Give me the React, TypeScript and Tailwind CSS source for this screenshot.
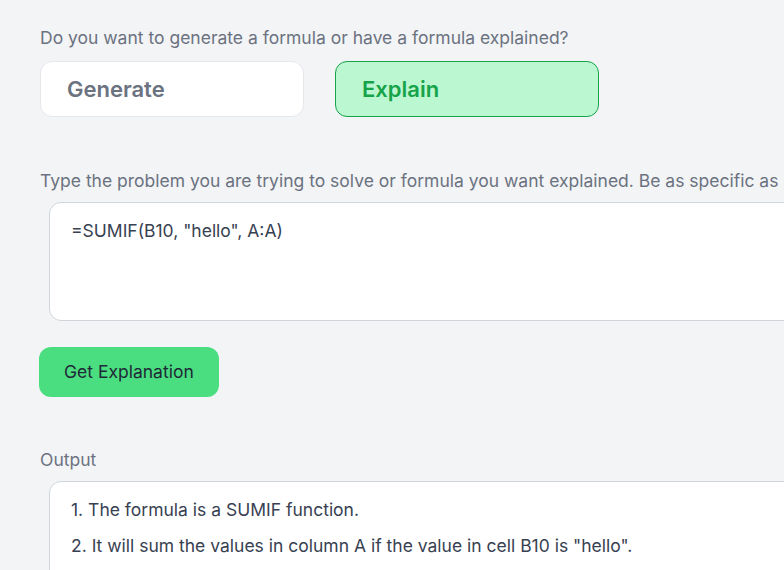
import { useState } from 'react';

export default function App() {
  const [mode, setMode] = useState<'generate' | 'explain'>('explain');
  const [input, setInput] = useState('=SUMIF(B10, "hello", A:A)');

  const lines = [
    '1. The formula is a SUMIF function.',
    '2. It will sum the values in column A if the value in cell B10 is "hello".',
  ];

  return (
    <div className="w-[784px] h-[570px] overflow-hidden bg-[#f3f4f6] font-['Inter',sans-serif]">
      <div className="w-[1000px] pl-10 pt-[26px]">
        <p className="text-[17.5px] leading-6 text-[#6b7280]">
          Do you want to generate a formula or have a formula explained?
        </p>

        <div className="flex gap-[31px] mt-[11px]">
          <button
            onClick={() => setMode('generate')}
            className={
              mode === 'generate'
                ? 'w-[264px] h-[56px] rounded-xl border border-[#16a34a] bg-[#bbf7d0] px-[26px] text-left text-[22px] font-semibold text-[#16a34a]'
                : 'w-[264px] h-[56px] rounded-xl border border-[#e5e7eb] bg-white px-[26px] text-left text-[22px] font-semibold text-[#6b7280]'
            }
          >
            Generate
          </button>
          <button
            onClick={() => setMode('explain')}
            className={
              mode === 'explain'
                ? 'w-[264px] h-[56px] rounded-xl border border-[#16a34a] bg-[#bbf7d0] px-[26px] text-left text-[22px] font-semibold text-[#16a34a]'
                : 'w-[264px] h-[56px] rounded-xl border border-[#e5e7eb] bg-white px-[26px] text-left text-[22px] font-semibold text-[#6b7280]'
            }
          >
            Explain
          </button>
        </div>

        <p className="mt-[52px] text-[17.5px] leading-6 text-[#6b7280] whitespace-nowrap">
          Type the problem you are trying to solve or formula you want explained. Be as specific as possible.
        </p>

        <textarea
          value={input}
          onChange={(e) => setInput(e.target.value)}
          className="block mt-[9px] ml-[9px] w-[900px] h-[119px] resize-none rounded-xl border border-[#d1d5db] bg-white px-[21px] pt-4 text-[17.5px] leading-6 text-[#374151] outline-none"
        />

        <button className="mt-[26px] -ml-px h-[50px] rounded-xl bg-[#4ade80] px-[25px] text-[17.5px] text-[#1f2937]">
          Get Explanation
        </button>

        <p className="mt-[51px] text-[17.5px] leading-6 text-[#6b7280]">Output</p>

        <div className="mt-[9px] ml-[9px] w-[900px] h-[120px] rounded-xl border border-[#d1d5db] bg-white px-[21px] pt-4">
          {lines.map((l) => (
            <p key={l} className="text-[17.5px] leading-6 mb-3 text-[#374151]">
              {l}
            </p>
          ))}
        </div>
      </div>
    </div>
  );
}
